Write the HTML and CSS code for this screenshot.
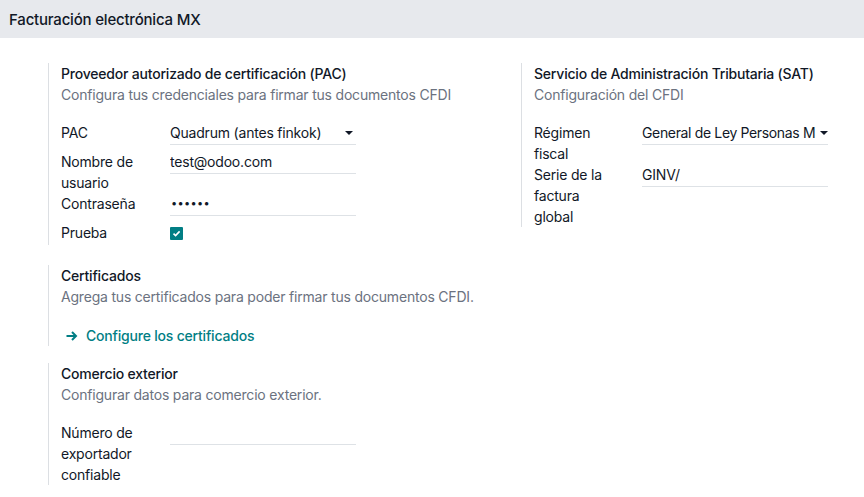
FILE: index.html
```html
<!DOCTYPE html>
<html lang="es">

<head>
    <meta charset="UTF-8">
    <meta name="viewport" content="width=device-width, initial-scale=1.0">
    <title>Facturación electrónica MX</title>
    <link rel="stylesheet" href="styles.css">
</head>

<body>
    <div class="app-header">Facturación electrónica MX</div>

    <div class="settings">
        <!-- PAC -->
        <div class="box">
            <div class="box-title">Proveedor autorizado de certificación (PAC)</div>
            <div class="box-sub">Configura tus credenciales para firmar tus documentos CFDI</div>
            <div class="fields">
                <div class="row">
                    <div class="label">PAC</div>
                    <div class="input select">
                        <span class="val">Quadrum (antes finkok)</span>
                        <span class="caret"></span>
                    </div>
                </div>
                <div class="row">
                    <div class="label">Nombre de usuario</div>
                    <div class="input">test@odoo.com</div>
                </div>
                <div class="row">
                    <div class="label">Contraseña</div>
                    <div class="input pass">••••••</div>
                </div>
                <div class="row">
                    <div class="label">Prueba</div>
                    <div class="check-cell">
                        <span class="checkbox">
                            <svg width="9" height="9" viewBox="0 0 9 9">
                                <path d="M1.5 4.6 L3.6 6.6 L7.6 2.4" fill="none" stroke="#fff" stroke-width="1.6" />
                            </svg>
                        </span>
                    </div>
                </div>
            </div>
        </div>

        <!-- SAT -->
        <div class="box right">
            <div class="box-title">Servicio de Administración Tributaria (SAT)</div>
            <div class="box-sub">Configuración del CFDI</div>
            <div class="fields">
                <div class="row">
                    <div class="label">Régimen fiscal</div>
                    <div class="input select">
                        <span class="val">General de Ley Personas M</span>
                        <span class="caret"></span>
                    </div>
                </div>
                <div class="row">
                    <div class="label">Serie de la factura global</div>
                    <div class="input">GINV/</div>
                </div>
            </div>
        </div>

        <!-- Certificados -->
        <div class="box cert">
            <div class="box-title">Certificados</div>
            <div class="box-sub">Agrega tus certificados para poder firmar tus documentos CFDI.</div>
            <a class="link" href="#">
                <svg class="arrow" width="12" height="10" viewBox="0 0 12 10">
                    <path d="M0.5 5 H10 M6 1 L10 5 L6 9" fill="none" stroke="#017e84" stroke-width="2" />
                </svg>Configure los certificados</a>
        </div>
        <div></div>

        <!-- Comercio exterior -->
        <div class="box comex">
            <div class="box-title">Comercio exterior</div>
            <div class="box-sub">Configurar datos para comercio exterior.</div>
            <div class="fields">
                <div class="row">
                    <div class="label">Número de exportador confiable</div>
                    <div class="input"></div>
                </div>
            </div>
        </div>
    </div>
</body>

</html>
```

FILE: styles.css
```css
html,
body {
    margin: 0;
    overflow: hidden;
}

body {
    font-family: Inter, "Noto Sans", sans-serif;
    font-size: 14px;
    line-height: 21px;
    letter-spacing: -0.2px;
    color: #111827;
    background: #fff;
}

.app-header {
    height: 38px;
    padding: 0 9px;
    display: flex;
    align-items: center;
    background: #e7e9ed;
    font-size: 15px;
    font-weight: 500;
}

.settings {
    display: grid;
    grid-template-columns: 473px 1fr;
    padding: 25px 0 0 48px;
}

.box {
    border-left: 1px solid #dcdfe3;
    padding-left: 12px;
}

.right {
    align-self: start;
}

.cert {
    margin-top: 20px;
}

.comex {
    margin-top: 17px;
}

.box-title {
    font-weight: 500;
}

.box-sub {
    color: #6b7280;
}

.fields {
    margin-top: 17px;
}

.row {
    display: grid;
    grid-template-columns: 109px 186px;
    align-items: start;
}

.right .row {
    grid-template-columns: 108px 186px;
}

.label {
    padding-right: 26px;
}

.input {
    height: 21px;
    padding-bottom: 1px;
    border-bottom: 1px solid #dee2e6;
    margin-bottom: 6px;
    white-space: nowrap;
    overflow: hidden;
}

.select {
    display: flex;
    align-items: center;
}

.select .val {
    flex: 1;
    overflow: hidden;
    white-space: nowrap;
}

.right .val {
    letter-spacing: -0.35px;
}

.caret {
    width: 0;
    height: 0;
    border-left: 4px solid transparent;
    border-right: 4px solid transparent;
    border-top: 4px solid #111827;
    margin: 0 3px;
}

.right .caret {
    margin: 0 0 0 1px;
}

.pass {
    font-size: 11px;
    letter-spacing: 0.3px;
    padding-left: 1px;
}

.check-cell {
    height: 23px;
    display: flex;
    align-items: center;
}

.checkbox {
    width: 13px;
    height: 13px;
    background: #017e84;
    border-radius: 1px;
    display: flex;
    align-items: center;
    justify-content: center;
}

.link {
    display: inline-flex;
    align-items: center;
    margin-top: 18px;
    color: #017e84;
    font-weight: 500;
    text-decoration: none;
    padding-left: 5px;
}

.arrow {
    margin-right: 8px;
}
```
